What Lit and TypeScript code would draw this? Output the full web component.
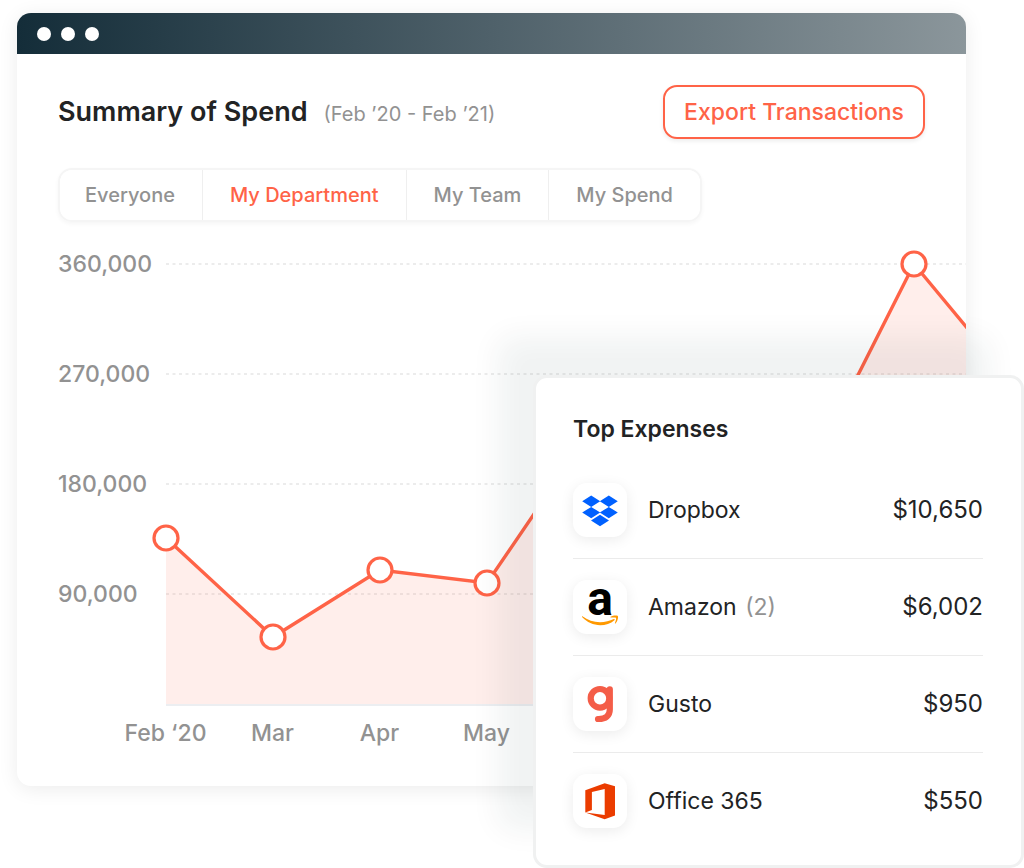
import { LitElement, html, css, svg } from "lit";
import { customElement, property, state } from "lit/decorators.js";
import { classMap } from "lit/directives/class-map.js";

const logos: Record<string, unknown> = {
  dropbox: svg`
    <g fill="#0061ff">
      <path d="M18.2 12.5l9 5.7-9 5.7-9-5.7zM35.8 12.5l9 5.7-9 5.7-9-5.7zM18.2 23.9l9 5.7-9 5.7-9-5.7zM35.8 23.9l9 5.7-9 5.7-9-5.7zM27 31.8l9 5.7-9 5.7-9-5.7z"/>
    </g>`,
  amazon: svg`
    <text class="letter" x="27" y="35" text-anchor="middle">a</text>
    <g fill="#ff9900">
      <path d="M9.4 36.2c5.2 3.900 11.300 6 17.600 6 5 0 9.900-1.200 13.800-3.100.7-.3 1.300.5.6 1.100-3.600 3.200-9 5-14.200 5-6.900 0-13.200-2.900-17.900-7.900-.6-.7-.4-1.400.1-1.100z"/>
      <path d="M37.600 36.700c2.100-1.300 5.700-1.500 7-.9 1.100.7.2 5.500-2.100 7.700-.4.3-.7.100-.6-.3.6-1.500 1.600-4.700 1.100-5.400-.5-.6-3.500-.4-5-.2-.5.100-.8-.5-.4-.9z"/>
    </g>`,
  gusto: svg`
    <g fill="none" stroke="#f45d48" stroke-width="6.2" stroke-linecap="round" stroke-linejoin="round">
      <circle cx="27" cy="21.3" r="9.3"/>
      <path d="M36.8 12.3V32.500C36.8 38.500 32.800 42.200 25 42"/>
    </g>`,
  office: svg`
    <path fill="#eb3c00" fill-rule="evenodd"
      d="M12.300 16.200L31.700 9.200L42 12.200V41.500L31.700 45.200L12.300 38.500L31.700 40.900V15L18.900 18V36L12.300 38.500Z"/>`,
};

@customElement("expense-row")
class ExpenseRow extends LitElement {
  @property() logo = "";
  @property() name = "";
  @property({ type: Number }) count = 0;
  @property() amount = "";

  static styles = css`
    :host {
      display: flex;
      align-items: center;
      gap: 21px;
      padding: 21px 0;
      font-size: 23px;
      line-height: 28px;
      color: #222324;
    }
    .tile {
      flex: none;
      width: 54px;
      height: 54px;
      border-radius: 14px;
      background: #fff;
      box-shadow: 0 3px 14px rgba(0, 0, 0, 0.08);
    }
    .tile svg {
      display: block;
      overflow: visible;
    }
    .letter {
      font: 700 48px Roboto, sans-serif;
      fill: #000;
    }
    .name {
      flex: 1;
      white-space: nowrap;
    }
    .count {
      color: #929292;
      margin-left: 2px;
    }
    .amount {
      font-size: 24px;
    }
  `;

  render() {
    return html`
      <span class="tile">
        <svg width="54" height="54" viewBox="0 0 54 54" aria-hidden="true">${logos[this.logo]}</svg>
      </span>
      <span class="name"
        >${this.name}
        ${this.count ? html`<span class="count">(${this.count})</span>` : ""}</span
      >
      <span class="amount">${this.amount}</span>
    `;
  }
}

@customElement("spend-chart")
class SpendChart extends LitElement {
  static styles = css`
    :host {
      display: grid;
      grid-template-columns: 92px 1fr;
      font-size: 23px;
      font-weight: 500;
      line-height: 28px;
      color: #929292;
    }
    .scale {
      display: flex;
      flex-direction: column;
      gap: 82px;
      white-space: nowrap;
    }
    .plot {
      display: block;
      width: 100%;
      height: 456px;
    }
    .grid-line {
      stroke: #e6e6e6;
      stroke-width: 1.5;
      stroke-dasharray: 3 3.5;
    }
    .base {
      stroke: #eceef1;
      stroke-width: 2;
    }
    .area {
      fill: #ff6347;
      fill-opacity: 0.11;
    }
    .line {
      fill: none;
      stroke: #ff6347;
      stroke-width: 3.4;
    }
    .dot {
      fill: #fff;
      stroke: #ff6347;
      stroke-width: 3.2;
    }
    .months {
      grid-column: 2;
      display: flex;
      margin-top: 13px;
      margin-left: -38px;
      overflow: hidden;
    }
    .month {
      flex: none;
      width: 107px;
      text-align: center;
    }
  `;

  private ticks = ["360,000", "270,000", "180,000", "90,000"];
  private months = ["Feb ‘20", "Mar", "Apr", "May"];
  private values = [288, 387, 320, 333, 176, 160, 226, 14, 143];

  render() {
    const points = this.values.map((y, i) => [16 + Math.round(i * 106.9), y]);
    const path = points.map((p) => p.join(",")).join(" ");
    const endX = points[points.length - 1][0];
    return html`
      <div class="scale">${this.ticks.map((t) => html`<span>${t}</span>`)}</div>
      <svg class="plot" role="img" aria-label="Spend by month">
        ${this.ticks.map(
          (_, i) => svg`<line class="grid-line" x1="16" x2="100%" y1=${14 + i * 110} y2=${14 + i * 110} />`
        )}
        <line class="base" x1="16" x2="100%" y1="455" y2="455" />
        <polygon class="area" points="16,454 ${path} ${endX},454" />
        <polyline class="line" points=${path} />
        ${points.map(([x, y]) => svg`<circle class="dot" cx=${x} cy=${y} r="12" />`)}
      </svg>
      <div class="months">${this.months.map((m) => html`<span class="month">${m}</span>`)}</div>
    `;
  }
}

@customElement("app-root")
class AppRoot extends LitElement {
  @state() private selected = "My Department";

  private tabs = ["Everyone", "My Department", "My Team", "My Spend"];
  private expenses = [
    { logo: "dropbox", name: "Dropbox", count: 0, amount: "$10,650" },
    { logo: "amazon", name: "Amazon", count: 2, amount: "$6,002" },
    { logo: "gusto", name: "Gusto", count: 0, amount: "$950" },
    { logo: "office", name: "Office 365", count: 0, amount: "$550" },
  ];

  static styles = css`
    :host {
      display: block;
      position: relative;
      padding: 13px 58px 82px 17px;
      background: #fff;
      font-family: Inter, "Liberation Sans", sans-serif;
      -webkit-font-smoothing: antialiased;
    }
    .window {
      border-radius: 14px;
      background: #fff;
      overflow: hidden;
      box-shadow: 0 3px 20px rgba(0, 0, 0, 0.08);
    }
    .bar {
      display: flex;
      align-items: center;
      gap: 10px;
      height: 41px;
      padding-left: 20px;
      background: linear-gradient(90deg, #142d39, #4f616a 50%, #8b969b);
    }
    .light {
      width: 14px;
      height: 14px;
      border-radius: 50%;
      background: #fff;
    }
    .body {
      padding: 31px 0 39px 41px;
    }
    .head {
      display: flex;
      align-items: center;
      gap: 16px;
      padding-right: 41px;
      white-space: nowrap;
    }
    h1,
    h2 {
      margin: 0;
      color: #222324;
    }
    h1 {
      font-size: 27px;
      font-weight: 600;
      line-height: 34px;
    }
    h2 {
      font-size: 23px;
      font-weight: 600;
      line-height: 28px;
    }
    .title {
      flex: 1;
      display: flex;
      align-items: baseline;
      gap: 16px;
    }
    .range {
      font-size: 20px;
      color: #929292;
    }
    button {
      font: inherit;
      cursor: pointer;
      background: #fff;
    }
    .export {
      height: 54px;
      padding: 0 19px;
      border: 2px solid #ff6347;
      border-radius: 14px;
      font-size: 23px;
      font-weight: 500;
      color: #ff6347;
      box-shadow: 0 2px 4px rgba(0, 0, 0, 0.08);
    }
    .tabs {
      display: inline-flex;
      height: 54px;
      margin: 29px 0 28px;
      box-sizing: border-box;
      border: 2px solid #f5f5f5;
      border-radius: 14px;
      overflow: hidden;
      vertical-align: top;
      box-shadow: 0 2px 4px rgba(0, 0, 0, 0.04);
    }
    .tab {
      padding: 0 27px;
      border: 0;
      border-left: 1px solid #efefef;
      font-size: 20px;
      font-weight: 500;
      color: #929292;
      white-space: nowrap;
    }
    .tab:first-child {
      border-left: 0;
      padding-left: 25px;
    }
    .active {
      color: #ff6347;
    }
    .card {
      position: absolute;
      right: 0;
      bottom: 0;
      box-sizing: border-box;
      width: 491px;
      padding: 37px 38px 16px 37px;
      border: 3px solid #f0f1f1;
      border-radius: 14px;
      background: #fff;
      box-shadow: -35px -38px 30px rgba(20, 50, 45, 0.06);
    }
    ul {
      list-style: none;
      margin: 19px 0 0;
      padding: 0;
    }
    li + li {
      border-top: 1px solid #ebebeb;
    }
  `;

  render() {
    return html`
      <main class="window">
        <div class="bar">
          <span class="light"></span><span class="light"></span><span class="light"></span>
        </div>
        <div class="body">
          <header class="head">
            <div class="title">
              <h1>Summary of Spend</h1>
              <span class="range">(Feb ’20 - Feb ’21)</span>
            </div>
            <button class="export">Export Transactions</button>
          </header>
          <nav class="tabs">
            ${this.tabs.map(
              (t) => html`<button
                class=${classMap({ tab: true, active: t === this.selected })}
                @click=${() => (this.selected = t)}
              >${t}</button>`
            )}
          </nav>
          <spend-chart></spend-chart>
        </div>
      </main>
      <aside class="card">
        <h2>Top Expenses</h2>
        <ul>
          ${this.expenses.map(
            (e) => html`<li>
              <expense-row
                .logo=${e.logo}
                .name=${e.name}
                .count=${e.count}
                .amount=${e.amount}
              ></expense-row>
            </li>`
          )}
        </ul>
      </aside>
    `;
  }
}
